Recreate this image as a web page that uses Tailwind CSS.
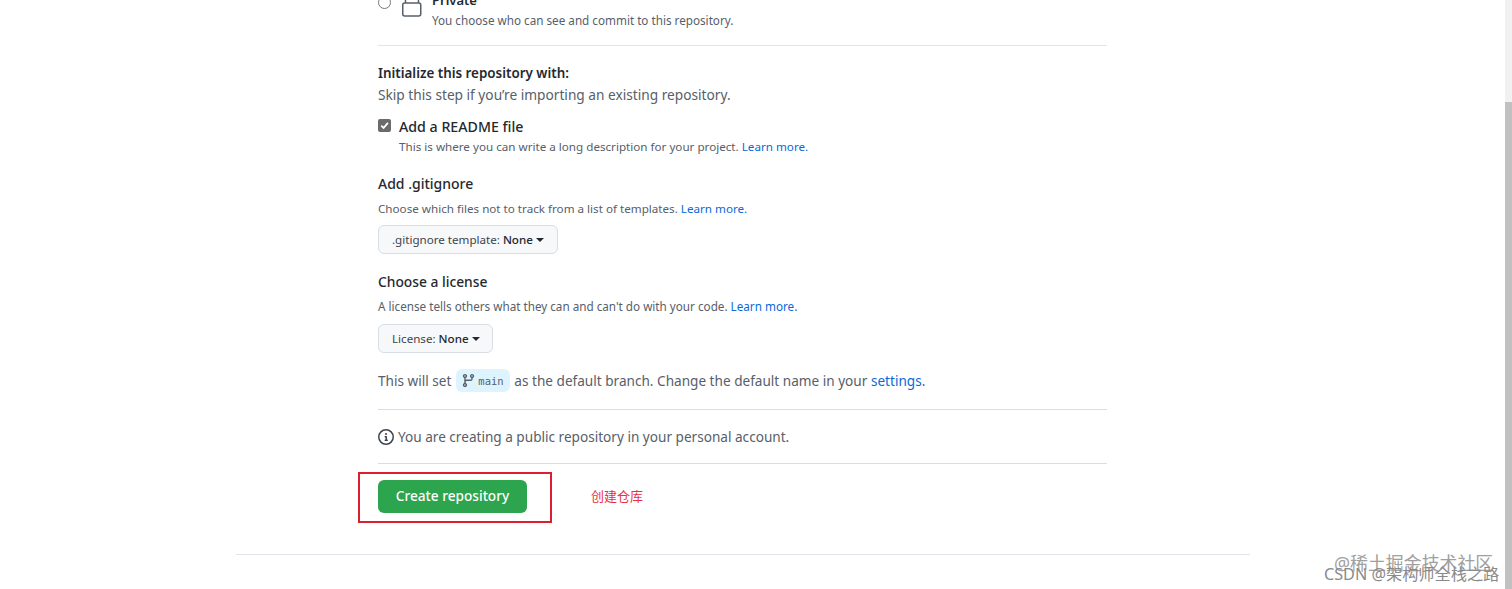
<!DOCTYPE html>
<html lang="en">
<head>
    <meta charset="UTF-8">
    <meta name="viewport" content="width=device-width, initial-scale=1.0">
    <title>Create repository</title>
    <script src="https://cdn.jsdelivr.net/npm/@tailwindcss/browser@4"></script>
</head>
<body class="relative h-[589px] overflow-hidden bg-white font-['Noto_Sans','Noto_Sans_CJK_SC',sans-serif] text-[#24292f]">
    <!-- scrollbar -->
    <div class="absolute right-0 top-0 h-full w-[7px] bg-[#f1f1f1]">
        <div class="mt-[102px] h-[487px] bg-[#c1c1c1]"></div>
    </div>

    <main class="ml-[378px] w-[729px]">
        <!-- private option, clipped by the top of the window -->
        <div class="-mt-[7px] flex h-[53px] border-b border-[#e1e4e8]">
            <span class="mt-[3px] h-[13px] w-[13px] rounded-full border border-[#767676]"></span>
            <svg class="ml-[11px] mt-[-1px] h-[25px] w-[20px] text-[#57606a]" viewBox="0 0 20 25" fill="none" stroke="currentColor" stroke-width="1.5">
                <rect x="0.75" y="11" width="18" height="13" rx="2"/>
                <path d="M3.5 11V5a6.5 4 0 0 1 13 0v6"/>
            </svg>
            <div class="ml-[10px] text-[11.7px] leading-[18px] text-[#57606a]">
                <div class="-mt-[3px] text-[13px] font-semibold leading-[20px] text-[#24292f]">Private</div>
                <div class="mt-[1px]">You choose who can see and commit to this repository.</div>
            </div>
        </div>

        <!-- init -->
        <h3 class="mt-[17px] text-[13.4px] font-semibold leading-[20px]">Initialize this repository with:</h3>
        <p class="mt-[2px] text-[13.7px] leading-[20px] text-[#57606a]">Skip this step if you’re importing an existing repository.</p>

        <div class="mt-[12px] flex">
            <span class="mt-[2px] flex h-[13px] w-[13px] items-center justify-center rounded-[2px] bg-[#6b6b6b]">
                <svg class="h-[11px] w-[11px]" viewBox="0 0 12 12" fill="none" stroke="white" stroke-width="2"><path d="M2.5 6.2 5 8.7 9.7 3.2"/></svg>
            </span>
            <div class="ml-[8px]">
                <div class="text-[14.2px] font-medium leading-[20px]">Add a README file</div>
                <div class="mt-[1px] text-[11.65px] leading-[18px] text-[#57606a]">This is where you can write a long description for your project. <a class="text-[#0969da]" href="#">Learn more.</a></div>
            </div>
        </div>

        <!-- gitignore -->
        <h4 class="mt-[18px] text-[14px] font-medium leading-[20px]">Add .gitignore</h4>
        <p class="mt-[6px] text-[11.65px] leading-[18px] text-[#57606a]">Choose which files not to track from a list of templates. <a class="text-[#0969da]" href="#">Learn more.</a></p>
        <button class="mt-[7px] flex h-[29px] w-[180px] items-center rounded-md border border-[#d8dee4] bg-[#f6f8fa] pl-[13px] text-[11.6px]">
            <span class="text-[#3d444d]">.gitignore template:&nbsp;</span><span class="font-medium">None</span>
            <span class="ml-[3px] mt-[1px] h-0 w-0 border-x-[4px] border-t-[4px] border-x-transparent border-t-[#24292f]"></span>
        </button>

        <!-- license -->
        <h4 class="mt-[18px] text-[13.8px] font-medium leading-[20px]">Choose a license</h4>
        <p class="mt-[5px] text-[11.7px] leading-[18px] text-[#57606a]">A license tells others what they can and can't do with your code. <a class="text-[#0969da]" href="#">Learn more.</a></p>
        <button class="mt-[9px] flex h-[29px] w-[115px] items-center rounded-md border border-[#d8dee4] bg-[#f6f8fa] pl-[13px] text-[11.6px]">
            <span class="text-[#3d444d]">License:&nbsp;</span><span class="font-medium">None</span>
            <span class="ml-[3px] mt-[1px] h-0 w-0 border-x-[4px] border-t-[4px] border-x-transparent border-t-[#24292f]"></span>
        </button>

        <!-- default branch -->
        <div class="mt-[16px] flex items-center text-[13.6px] leading-[22px] text-[#57606a]">
            <span>This will set</span>
            <span class="ml-[5px] flex h-[23px] w-[54px] items-center rounded-md bg-[#ddf4ff] pl-[5px]">
                <svg class="h-[15px] w-[15px] text-[#57606a]" viewBox="0 0 16 16" fill="currentColor"><path d="M9.5 3.25a2.25 2.25 0 1 1 3 2.122V6A2.5 2.5 0 0 1 10 8.5H6a1 1 0 0 0-1 1v1.128a2.251 2.251 0 1 1-1.5 0V5.372a2.25 2.25 0 1 1 1.5 0v1.836A2.493 2.493 0 0 1 6 7h4a1 1 0 0 0 1-1v-.628A2.25 2.25 0 0 1 9.5 3.25Zm-6 0a.75.75 0 1 0 1.5 0 .75.75 0 0 0-1.5 0Zm8.25-.75a.75.75 0 1 0 0 1.5.75.75 0 0 0 0-1.5ZM4.25 12a.75.75 0 1 0 0 1.5.75.75 0 0 0 0-1.5Z"/></svg>
                <span class="ml-[2px] font-['DejaVu_Sans_Mono',monospace] text-[10.5px]">main</span>
            </span>
            <span class="ml-[4px]">as the default branch. Change the default name in your <a class="text-[#0969da]" href="#">settings</a>.</span>
        </div>

        <div class="mt-[17px] flex items-center border-y border-[#d8dee4] pb-[16px] pt-[17px] text-[13.6px] leading-[20px] text-[#57606a]">
            <svg class="mr-[4px] h-[16px] w-[16px] text-[#3d444d]" viewBox="0 0 16 16" fill="currentColor"><path d="M0 8a8 8 0 1 1 16 0A8 8 0 0 1 0 8Zm8-6.5a6.5 6.5 0 1 0 0 13 6.5 6.5 0 0 0 0-13ZM6.5 7.75A.75.75 0 0 1 7.25 7h1a.75.75 0 0 1 .75.75v2.75h.25a.75.75 0 0 1 0 1.5h-2a.75.75 0 0 1 0-1.5h.25v-2h-.25a.75.75 0 0 1-.75-.75ZM8 6a1 1 0 1 1 0-2 1 1 0 0 1 0 2Z"/></svg>
            You are creating a public repository in your personal account.
        </div>

        <button class="mt-[16px] flex h-[33px] w-[149px] items-center justify-center rounded-md bg-[#2da44e] text-[13.65px] font-medium text-white">Create repository</button>
    </main>

    <!-- red annotation -->
    <div class="absolute left-[358px] top-[472px] h-[51px] w-[194px] border-2 border-[#dc1f2e]"></div>
    <div class="absolute left-[591px] top-[487px] text-[13px] leading-[18px] text-[#e8323f]">创建仓库</div>

    <div class="ml-[236px] mt-[41px] w-[1014px] border-t border-[#e1e4e8]"></div>

    <!-- watermarks -->
    <div class="absolute left-[1334px] top-[553px] text-[17.9px] leading-[20px] text-[#a0a0a0]">@稀土掘金技术社区</div>
    <div class="absolute left-[1324px] top-[564px] text-[16.2px] leading-[20px] text-[#8a8a8a]">CSDN @架构师全栈之路</div>
</body>
</html>
